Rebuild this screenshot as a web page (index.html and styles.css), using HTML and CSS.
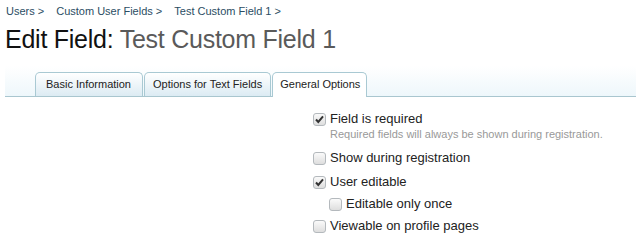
FILE: index.html
```html
<!DOCTYPE html>
<html>
<head>
<meta charset="utf-8">
<link rel="stylesheet" href="styles.css">
</head>
<body>
<div class="page">
  <nav class="crumbs">
    <a class="crumb">Users &gt;</a>
    <a class="crumb">Custom User Fields &gt;</a>
    <a class="crumb">Test Custom Field 1 &gt;</a>
  </nav>
  <h1 class="title"><span class="title-main">Edit Field:</span> <span class="title-sub">Test Custom Field 1</span></h1>
  <div class="tabbar">
    <ul class="tabs">
      <li class="tab wide">Basic Information</li>
      <li class="tab mid">Options for Text Fields</li>
      <li class="tab active">General Options</li>
    </ul>
  </div>
  <div class="options">
    <label class="opt">
      <span class="box"><svg viewBox="0 0 13 13" width="13" height="13"><path d="M3 6.5 L5.3 9 L10 3.4" fill="none" stroke="#333" stroke-width="2"/></svg></span>
      <span class="opt-text">Field is required</span>
    </label>
    <p class="hint">Required fields will always be shown during registration.</p>
    <label class="opt after-hint">
      <span class="box"></span>
      <span class="opt-text">Show during registration</span>
    </label>
    <label class="opt">
      <span class="box"><svg viewBox="0 0 13 13" width="13" height="13"><path d="M3 6.5 L5.3 9 L10 3.4" fill="none" stroke="#333" stroke-width="2"/></svg></span>
      <span class="opt-text">User editable</span>
    </label>
    <label class="opt sub">
      <span class="box"></span>
      <span class="opt-text">Editable only once</span>
    </label>
    <label class="opt tight">
      <span class="box"></span>
      <span class="opt-text">Viewable on profile pages</span>
    </label>
  </div>
</div>
</body>
</html>
```

FILE: styles.css
```css
html, body {
  margin: 0;
  padding: 0;
  background: #fff;
  overflow: hidden;
}
body {
  font-family: "Liberation Sans", Arial, sans-serif;
  color: #222;
}
.page {
  padding: 4px 0 0 0;
}
.crumbs {
  display: flex;
  gap: 12px;
  padding-left: 6px;
  font-size: 11px;
  line-height: 14px;
  height: 14px;
}
.crumb {
  color: #2b4d63;
  text-decoration: none;
}
.title {
  margin: 5px 0 0 0;
  padding-left: 5px;
  font-size: 25px;
  font-weight: normal;
  line-height: 32px;
  letter-spacing: -0.25px;
}
.title-main {
  color: #111;
}
.title-sub {
  color: #5a5a5a;
}
.tabbar {
  margin: 11px 0 0 5px;
  height: 30px;
  background: linear-gradient(#ffffff, #eef7fb);
  border-bottom: 1px solid #a9c6cf;
  display: flex;
  align-items: flex-end;
}
.tabs {
  display: flex;
  gap: 1px;
  list-style: none;
  margin: 0 0 -1px 30px;
  padding: 0;
}
.tab {
  font-size: 11px;
  line-height: 22px;
  padding: 0 9px;
  color: #222;
  border: 1px solid #a9c9d3;
  border-bottom: none;
  border-radius: 5px 5px 0 0;
  background: linear-gradient(#ffffff, #dcebf3);
  height: 23px;
}
.tab.wide {
  padding: 0 11px 0 10px;
}
.tab.mid {
  padding: 0 8px 0 8px;
}
.tab.active {
  background: #fff;
  height: 24px;
  padding: 0 6px 0 7px;
}
.options {
  display: flex;
  flex-direction: column;
  align-items: flex-start;
  padding: 14px 0 0 313px;
}
.opt {
  display: flex;
  align-items: center;
  gap: 4px;
  font-size: 13px;
  line-height: 16px;
  color: #222;
  margin-top: 8px;
}
.opt:first-child {
  margin-top: 0;
}
.opt.after-hint {
  margin-top: 9px;
}
.opt.sub {
  padding-left: 16px;
  margin-top: 6px;
}
.opt.tight {
  margin-top: 6px;
}
.box {
  width: 11px;
  height: 11px;
  border: 1px solid #b4b9bd;
  border-radius: 3px;
  background: linear-gradient(#fafafa, #dedede);
  position: relative;
  flex: none;
}
.box svg {
  position: absolute;
  left: -1px;
  top: -1px;
}
.hint {
  margin: 0 0 0 17px;
  font-size: 11px;
  line-height: 14px;
  color: #999;
}
```
